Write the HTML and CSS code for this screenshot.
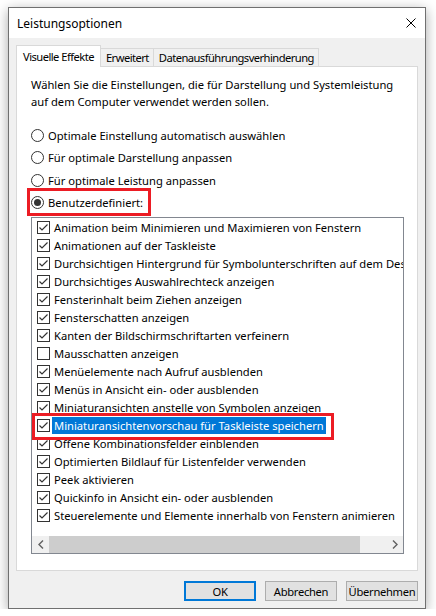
FILE: index.html
```html
<!DOCTYPE html>
<html lang="de">
<head>
    <meta charset="UTF-8">
    <meta name="viewport" content="width=device-width, initial-scale=1.0">
    <title>Leistungsoptionen</title>
    <link rel="stylesheet" href="styles.css">
</head>
<body>
    <div class="window">
        <div class="titlebar">
            <span class="title">Leistungsoptionen</span>
            <svg class="close" width="10" height="10" viewBox="0 0 10 10">
                <path d="M0.5 0.5 L9.5 9.5 M9.5 0.5 L0.5 9.5" stroke="#000" stroke-width="1" fill="none"/>
            </svg>
        </div>

        <div class="dialog">
            <div class="tabs">
                <div class="tab tab-active">Visuelle Effekte</div>
                <div class="tab">Erweitert</div>
                <div class="tab">Datenausführungsverhinderung</div>
            </div>

            <div class="panel">
                <p class="intro">Wählen Sie die Einstellungen, die für Darstellung und Systemleistung<br>auf dem Computer verwendet werden sollen.</p>

                <div class="radios">
                    <div class="radio"><span class="circle"></span>Optimale Einstellung automatisch auswählen</div>
                    <div class="radio"><span class="circle"></span>Für optimale Darstellung anpassen</div>
                    <div class="radio"><span class="circle"></span>Für optimale Leistung anpassen</div>
                    <div class="radio mark mark-radio"><span class="circle checked"></span>Benutzerdefiniert:</div>
                </div>

                <div class="list">
                    <div class="items">
                        <div class="item"><span class="box on"></span>Animation beim Minimieren und Maximieren von Fenstern</div>
                        <div class="item"><span class="box on"></span>Animationen auf der Taskleiste</div>
                        <div class="item"><span class="box on"></span>Durchsichtigen Hintergrund für Symbolunterschriften auf dem Desktop</div>
                        <div class="item"><span class="box on"></span>Durchsichtiges Auswahlrechteck anzeigen</div>
                        <div class="item"><span class="box on"></span>Fensterinhalt beim Ziehen anzeigen</div>
                        <div class="item"><span class="box on"></span>Fensterschatten anzeigen</div>
                        <div class="item"><span class="box on"></span>Kanten der Bildschirmschriftarten verfeinern</div>
                        <div class="item"><span class="box"></span>Mausschatten anzeigen</div>
                        <div class="item"><span class="box on"></span>Menüelemente nach Aufruf ausblenden</div>
                        <div class="item"><span class="box on"></span>Menüs in Ansicht ein- oder ausblenden</div>
                        <div class="item"><span class="box on"></span>Miniaturansichten anstelle von Symbolen anzeigen</div>
                        <div class="item">
                            <span class="mark mark-item"><span class="box on"></span><span class="selected">Miniaturansichtenvorschau für Taskleiste speichern</span></span>
                        </div>
                        <div class="item"><span class="box on"></span>Offene Kombinationsfelder einblenden</div>
                        <div class="item"><span class="box on"></span>Optimierten Bildlauf für Listenfelder verwenden</div>
                        <div class="item"><span class="box on"></span>Peek aktivieren</div>
                        <div class="item"><span class="box on"></span>Quickinfo in Ansicht ein- oder ausblenden</div>
                        <div class="item"><span class="box on"></span>Steuerelemente und Elemente innerhalb von Fenstern animieren</div>
                    </div>

                    <div class="hscroll">
                        <div class="arrow">
                            <svg width="6" height="9" viewBox="0 0 6 9"><path d="M5 0.5 L1 4.5 L5 8.5" stroke="#606060" stroke-width="1.4" fill="none"/></svg>
                        </div>
                        <div class="track"><div class="thumb"></div></div>
                        <div class="arrow">
                            <svg width="6" height="9" viewBox="0 0 6 9"><path d="M1 0.5 L5 4.5 L1 8.5" stroke="#606060" stroke-width="1.4" fill="none"/></svg>
                        </div>
                    </div>
                </div>
            </div>

            <div class="buttons">
                <button class="btn btn-default">OK</button>
                <button class="btn">Abbrechen</button>
                <button class="btn">Übernehmen</button>
            </div>
        </div>
    </div>
</body>
</html>
```

FILE: styles.css
```css
* {
    box-sizing: border-box;
}

body {
    margin: 0;
    background-color: #ffffff;
    font-family: "Noto Sans", "DejaVu Sans", sans-serif;
    font-size: 11.2px;
    color: #000000;
}

.window {
    width: 418px;
    height: 602px;
    margin: 7px 0 0 8px;
    border: 1px solid #707070;
    background-color: #f0f0f0;
    box-shadow: 0 3px 12px rgba(0, 0, 0, 0.35);
    display: flex;
    flex-direction: column;
}

.titlebar {
    height: 30px;
    flex-shrink: 0;
    background-color: #ffffff;
    display: flex;
    align-items: center;
    justify-content: space-between;
    padding: 0 9px 0 8px;
    font-size: 12px;
}

.dialog {
    flex: 1;
    padding: 7px 7px 0 7px;
    display: flex;
    flex-direction: column;
}

/* Reiter */
.tabs {
    height: 21px;
    display: flex;
    align-items: flex-end;
    position: relative;
    z-index: 1;
}

.tab {
    height: 18px;
    flex: none;
    padding: 0 4px 0 5px;
    display: flex;
    align-items: center;
    background-color: #f0f0f0;
    border: 1px solid #d9d9d9;
    border-left: none;
    border-bottom: none;
    white-space: nowrap;
    letter-spacing: -0.55px;
}

.tab-active {
    height: 22px;
    margin-bottom: -1px;
    padding: 0 6px 1px 6px;
    background-color: #ffffff;
    border-left: 1px solid #d9d9d9;
}

.panel {
    height: 505px;
    background-color: #ffffff;
    border: 1px solid #d9d9d9;
    padding: 9px 13px 0 14px;
}

.intro {
    margin: 0;
    line-height: 17px;
}

.radios {
    margin-top: 17px;
    display: flex;
    flex-direction: column;
    gap: 6.5px;
}

.radio {
    height: 16px;
    display: flex;
    align-items: center;
    gap: 4px;
    align-self: flex-start;
}

.circle {
    width: 13px;
    height: 13px;
    border: 1px solid #333333;
    border-radius: 50%;
    display: flex;
    align-items: center;
    justify-content: center;
}

.circle.checked::before {
    content: "";
    width: 7px;
    height: 7px;
    border-radius: 50%;
    background-color: #333333;
}

/* Liste mit Kontrollkästchen */
.list {
    margin-top: 6.5px;
    height: 337px;
    border: 1px solid #828790;
    display: flex;
    flex-direction: column;
}

.items {
    flex: 1;
    overflow: hidden;
}

.item {
    height: 18px;
    display: flex;
    align-items: center;
    padding-left: 5px;
    white-space: nowrap;
}

.box {
    width: 13px;
    height: 13px;
    flex-shrink: 0;
    margin-right: 4px;
    border: 1px solid #333333;
    background-color: #ffffff;
}

.box.on {
    background-image: url("data:image/svg+xml;utf8,<svg xmlns='http://www.w3.org/2000/svg' width='11' height='11' viewBox='0 0 11 11'><polyline points='1.5,5.5 4,8 9.5,2.5' fill='none' stroke='%23333333' stroke-width='1.2'/></svg>");
    background-repeat: no-repeat;
}

.selected {
    margin-left: -2px;
    padding: 0 2px;
    line-height: 17px;
    background-color: #0078d7;
    color: #ffffff;
}

.hscroll {
    height: 17px;
    flex-shrink: 0;
    display: flex;
    background-color: #f0f0f0;
}

.arrow {
    width: 17px;
    display: flex;
    align-items: center;
    justify-content: center;
}

.track {
    flex: 1;
}

.thumb {
    width: 311px;
    height: 100%;
    background-color: #cdcdcd;
}

/* rote Markierungen */
.mark {
    position: relative;
}

.mark-item {
    display: flex;
    align-items: center;
    height: 18px;
}

.mark::after {
    content: "";
    position: absolute;
    border: 3px solid #ec1c24;
    z-index: 2;
}

.mark-radio::after {
    top: -7px;
    bottom: -5px;
    left: -4px;
    right: -8px;
}

.mark-item::after {
    top: -3px;
    bottom: -6px;
    left: -5px;
    right: -8px;
}

.buttons {
    margin-top: 10px;
    display: flex;
    justify-content: flex-end;
    gap: 9px;
}

.btn {
    width: 72px;
    height: 20px;
    padding: 0;
    font-family: inherit;
    font-size: 11.2px;
    letter-spacing: -0.3px;
    color: #000000;
    background-color: #e1e1e1;
    border: 1px solid #adadad;
}

.btn-default {
    border: 2px solid #0078d7;
}
```
